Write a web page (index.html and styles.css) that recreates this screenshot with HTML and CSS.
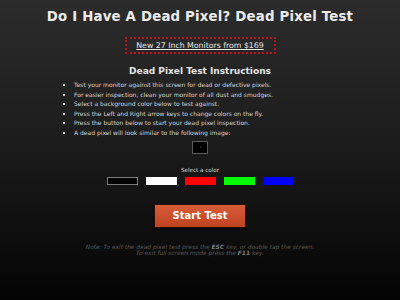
FILE: index.html
```html
<!DOCTYPE html>
<html>
<head>
<meta charset="utf-8">
<link rel="stylesheet" href="styles.css">
</head>
<body>
<div class="page">
  <h1 class="title">Do I Have A Dead Pixel? Dead Pixel Test</h1>
  <div class="promo"><a href="#" class="promo-link">New 27 Inch Monitors from $169</a></div>
  <h2 class="subtitle">Dead Pixel Test Instructions</h2>
  <ul class="steps">
    <li>Test your monitor against this screen for dead or defective pixels.</li>
    <li>For easier inspection, clean your monitor of all dust and smudges.</li>
    <li>Select a background color below to test against.</li>
    <li>Press the Left and Right arrow keys to change colors on the fly.</li>
    <li>Press the button below to start your dead pixel inspection.</li>
    <li>A dead pixel will look similar to the following image:</li>
  </ul>
  <div class="sample"><span class="sample-dot"></span></div>
  <div class="select-label">Select a color</div>
  <div class="swatches">
    <span class="swatch swatch-black"></span>
    <span class="swatch swatch-white"></span>
    <span class="swatch swatch-red"></span>
    <span class="swatch swatch-green"></span>
    <span class="swatch swatch-blue"></span>
  </div>
  <button class="start">Start Test</button>
  <p class="note">Note: To exit the dead pixel test press the <b>ESC</b> key, or double tap the screen.<br>To exit full screen mode press the <b>F11</b> key.</p>
</div>
</body>
</html>
```

FILE: styles.css
```css
html, body {
  margin: 0;
  padding: 0;
  height: 100%;
}
body {
  background: linear-gradient(to bottom, #2c2c2c 0%, #1b1b1b 50%, #040404 100%);
  font-family: "DejaVu Sans", Verdana, sans-serif;
  color: #e6e6e6;
}
.page {
  display: flex;
  flex-direction: column;
  align-items: center;
  padding-top: 9px;
}
.title {
  margin: 0;
  font-size: 13.3px;
  line-height: 16px;
  font-weight: bold;
  color: #ececec;
  letter-spacing: 0.2px;
}
.promo {
  margin-top: 12px;
  width: 147px;
  height: 13px;
  border: 2px dotted #c4101e;
  display: flex;
  align-items: center;
  justify-content: center;
}
.promo-link {
  color: #e8e8e8;
  font-size: 7.8px;
  text-decoration: underline;
}
.subtitle {
  margin: 11px 0 0;
  font-size: 9px;
  line-height: 12px;
  font-weight: bold;
  color: #e6e6e6;
}
.steps {
  margin: 3px 0 0;
  padding: 0;
  list-style: none;
  width: 276px;
  font-size: 6px;
  line-height: 9.6px;
  color: #d4d4d4;
}
.steps li {
  position: relative;
  padding-left: 12px;
}
.steps li::before {
  content: "";
  position: absolute;
  left: 1px;
  top: 4px;
  width: 2px;
  height: 2px;
  background: #cfcfcf;
}
.sample {
  margin-top: 3px;
  width: 14px;
  height: 11px;
  border: 1px solid #5a5a5a;
  background: #000;
  display: flex;
  align-items: center;
  justify-content: center;
}
.sample-dot {
  width: 1px;
  height: 2px;
  background: #2a2a2a;
}
.select-label {
  margin-top: 13px;
  font-size: 5.6px;
  line-height: 7px;
  color: #d8d8d8;
}
.swatches {
  margin-top: 3px;
  display: flex;
  gap: 8px;
}
.swatch {
  width: 31px;
  height: 8px;
  box-sizing: border-box;
}
.swatch-black { background: #000; border: 1px solid #7a7a7a; }
.swatch-white { background: #fff; }
.swatch-red { background: #ff0000; }
.swatch-green { background: #00ff00; }
.swatch-blue { background: #0000ff; }
.start {
  margin-top: 19px;
  width: 92px;
  height: 24px;
  border: 1px solid #2a0e06;
  border-radius: 1px;
  background: linear-gradient(to bottom, #d85c36 0%, #bf4322 100%);
  color: #fff;
  font-family: "DejaVu Sans", Verdana, sans-serif;
  font-weight: bold;
  font-size: 10px;
  padding: 0;
  box-shadow: 0 1px 2px rgba(0,0,0,0.6);
}
.note {
  margin: 16px 0 0;
  font-size: 5.9px;
  line-height: 6px;
  font-style: italic;
  color: #585858;
  text-align: center;
}
.note b {
  color: #7a7a7a;
}
```
